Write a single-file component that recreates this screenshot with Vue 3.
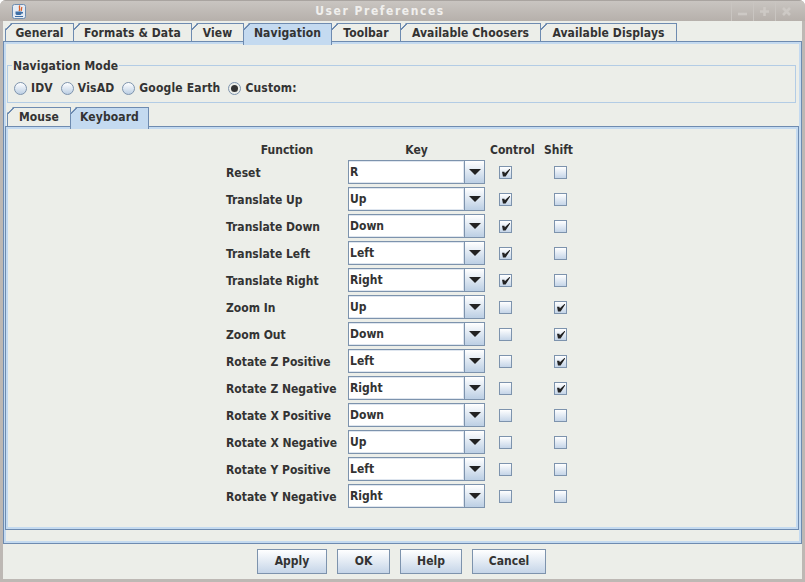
<script setup>
const tabs = [
  { label: 'General', width: 69 },
  { label: 'Formats & Data', width: 119 },
  { label: 'View', width: 53 },
  { label: 'Navigation', width: 89, active: true },
  { label: 'Toolbar', width: 70 },
  { label: 'Available Choosers', width: 141 },
  { label: 'Available Displays', width: 137 },
]
const subTabs = [
  { label: 'Mouse', width: 64 },
  { label: 'Keyboard', width: 79, active: true },
]
const modes = [
  { label: 'IDV' },
  { label: 'VisAD' },
  { label: 'Google Earth' },
  { label: 'Custom:', on: true },
]
const rows = [
  ['Reset', 'R', true, false],
  ['Translate Up', 'Up', true, false],
  ['Translate Down', 'Down', true, false],
  ['Translate Left', 'Left', true, false],
  ['Translate Right', 'Right', true, false],
  ['Zoom In', 'Up', false, true],
  ['Zoom Out', 'Down', false, true],
  ['Rotate Z Positive', 'Left', false, true],
  ['Rotate Z Negative', 'Right', false, true],
  ['Rotate X Positive', 'Down', false, false],
  ['Rotate X Negative', 'Up', false, false],
  ['Rotate Y Positive', 'Left', false, false],
  ['Rotate Y Negative', 'Right', false, false],
]
const buttons = [
  { label: 'Apply', width: 70 },
  { label: 'OK', width: 53 },
  { label: 'Help', width: 62 },
  { label: 'Cancel', width: 74 },
]
</script>

<template>
  <div class="window">
    <header class="titlebar">
      <span class="app-icon">
        <svg width="14" height="15" viewBox="0 0 14 15">
          <rect x="0.5" y="0.5" width="13" height="14" rx="2" fill="#e4ebf4" stroke="#6d8cb0" />
          <path d="M8 1.5 C6 3.5 9 4.5 7 7 M10 3 C9 4.5 10 5.5 9 7" stroke="#d9602a" stroke-width="1.3" fill="none" />
          <path d="M3.5 7.5 H9.5 V9.5 C9.5 10.5 8.5 11 7.5 11 H5.5 C4.5 11 3.5 10.5 3.5 9.5 Z M9.5 8 H11 V9.5 H9.5" fill="#3d6ea5" />
          <path d="M3 12.5 H11" stroke="#3d6ea5" stroke-width="1.2" />
        </svg>
      </span>
      <span class="title">User Preferences</span>
      <div class="controls">
        <span class="ctl">
          <svg width="9" height="9" viewBox="0 0 9 9"><path d="M0 7 H9" /></svg>
        </span>
        <span class="ctl">
          <svg width="9" height="9" viewBox="0 0 9 9"><path d="M0 4.5 H9 M4.5 0 V9" /></svg>
        </span>
        <span class="ctl">
          <svg width="9" height="9" viewBox="0 0 9 9"><path d="M1 1 L8 8 M8 1 L1 8" /></svg>
        </span>
      </div>
    </header>

    <div class="client">
      <nav class="tabs">
        <div
          v-for="t in tabs"
          :key="t.label"
          class="tab"
          :class="{ active: t.active }"
          :style="{ width: t.width + 'px' }"
        >{{ t.label }}</div>
      </nav>

      <section class="outer-panel">
        <div class="group">
          <span class="group-title">Navigation Mode</span>
          <label v-for="m in modes" :key="m.label" class="radio-item">
            <span class="radio" :class="{ on: m.on }"></span>{{ m.label }}
          </label>
        </div>

        <nav class="tabs sub">
          <div
            v-for="t in subTabs"
            :key="t.label"
            class="tab"
            :class="{ active: t.active }"
            :style="{ width: t.width + 'px' }"
          >{{ t.label }}</div>
        </nav>

        <div class="inner-panel">
          <div class="grid">
            <div class="head">Function</div>
            <div class="head">Key</div>
            <div class="head left">Control</div>
            <div class="head left">Shift</div>
            <template v-for="r in rows" :key="r[0]">
              <div class="name">{{ r[0] }}</div>
              <div class="combo">
                <span class="combo-text">{{ r[1] }}</span>
                <span class="combo-btn"><i></i></span>
              </div>
              <div class="cell c1"><span class="check" :class="{ on: r[2] }"></span></div>
              <div class="cell c2"><span class="check" :class="{ on: r[3] }"></span></div>
            </template>
          </div>
        </div>
      </section>

      <footer class="footer">
        <button v-for="b in buttons" :key="b.label" class="btn" :style="{ width: b.width + 'px' }">{{ b.label }}</button>
      </footer>
    </div>
  </div>
</template>

<style>
html, body { margin: 0; background: #fff; }
</style>

<style scoped>
.window {
  width: 805px;
  height: 582px;
  box-sizing: border-box;
  background: #bdb8b4;
  border-radius: 6px 6px 0 0;
  padding: 0 3px 3px;
  display: flex;
  flex-direction: column;
  font-family: "DejaVu Sans Condensed", "DejaVu Sans", sans-serif;
  font-stretch: condensed;
  font-size: 12px;
  font-weight: 700;
  color: #333;
  overflow: hidden;
}
.titlebar {
  height: 21px;
  flex: none;
  margin: 0 -3px;
  display: flex;
  align-items: center;
  position: relative;
  background: linear-gradient(#c9c5c1, #b6b0ab);
  border-top: 1px solid #a9a4a0;
  box-sizing: border-box;
}
.app-icon { margin-left: 12px; display: flex; }
.title {
  position: absolute;
  left: 0;
  width: 760px;
  text-align: center;
  color: #f0efed;
  font-size: 12px;
  letter-spacing: 1.55px;
}
.controls {
  margin-left: auto;
  margin-right: 8px;
  display: flex;
  height: 100%;
}
.ctl {
  width: 22px;
  box-sizing: border-box;
  border-left: 1px solid #c9c5c1;
  display: flex;
  align-items: center;
  justify-content: center;
}
.ctl path {
  stroke: #cdc9c5;
  stroke-width: 2.6;
  fill: none;
}
.client {
  flex: 1;
  display: flex;
  flex-direction: column;
  background: #eceee9;
  min-height: 0;
}
.tabs {
  display: flex;
  height: 20px;
  margin-top: 2px;
  padding-left: 2px;
  flex: none;
  position: relative;
  z-index: 1;
}
.tab {
  position: relative;
  box-sizing: border-box;
  height: 19px;
  border: 1px solid #6e8bb0;
  border-bottom: none;
  text-align: center;
  line-height: 18px;
  letter-spacing: 0.1px;
  clip-path: polygon(6px 0, 100% 0, 100% 100%, 0 100%, 0 6px);
  margin-right: -1px;
}
.tab::before {
  content: "";
  position: absolute;
  left: -1px;
  top: -1px;
  width: 7px;
  height: 7px;
  background: linear-gradient(135deg, transparent 44%, #6e8bb0 44%, #6e8bb0 58%, transparent 58%);
}
.tab.active {
  height: 22px;
  background: #c4daf0;
  z-index: 2;
}
.outer-panel {
  flex: none;
  height: 503px;
  box-sizing: border-box;
  margin-top: -2px;
  border: 1px solid #6e8bb0;
  box-shadow: inset 0 0 0 2px #c4daf0;
  padding: 23px 5px 0 3px;
  display: flex;
  flex-direction: column;
}
.group {
  position: relative;
  height: 38px;
  flex: none;
  box-sizing: border-box;
  border: 1px solid #b3cce5;
  padding: 8px 0 0 6px;
  display: flex;
  align-items: center;
}
.group-title {
  position: absolute;
  top: -8px;
  left: 4px;
  padding: 0 1px;
  background: #eceee9;
  line-height: 16px;
  letter-spacing: 0.15px;
}
.radio-item {
  display: inline-flex;
  align-items: center;
  margin-right: 8px;
  letter-spacing: 0.17px;
}
.radio {
  width: 13px;
  height: 13px;
  box-sizing: border-box;
  border: 1px solid #7d93ad;
  border-radius: 50%;
  background: linear-gradient(#fff, #bccfe4);
  margin-right: 4px;
  position: relative;
}
.radio.on { background: #eceee9; }
.radio.on::after {
  content: "";
  position: absolute;
  left: 2px;
  top: 2px;
  width: 7px;
  height: 7px;
  border-radius: 50%;
  background: #333;
}
.tabs.sub {
  margin-top: 4px;
  padding-left: 0;
}
.inner-panel {
  flex: 1;
  margin: -1px -3px 13px -2px;
  border: 1px solid #6e8bb0;
  box-shadow: inset 0 0 0 2px #c4daf0;
  display: flex;
  justify-content: center;
  padding-top: 12px;
  min-height: 0;
}
.grid {
  display: grid;
  grid-template-columns: 122px 137px 54px 39px;
  grid-template-rows: 19px repeat(13, 27px);
  align-content: start;
}
.head {
  text-align: center;
  line-height: 22px;
}
.head.left { text-align: left; padding-left: 5px; }
.name {
  display: flex;
  align-items: center;
  white-space: nowrap;
  padding-top: 3px;
}
.combo {
  height: 24px;
  box-sizing: border-box;
  border: 1px solid #7d93ad;
  display: flex;
  margin-top: 2px;
}
.combo-text {
  flex: 1;
  background: #fff;
  border: 1px solid #dfe6ef;
  border-width: 1px 1px 1px 0;
  padding-left: 1px;
  line-height: 20px;
}
.combo-btn {
  width: 19px;
  border-left: 1px solid #7d93ad;
  background: linear-gradient(#fff, #bccfe4);
  display: flex;
  align-items: center;
  justify-content: center;
}
.combo-btn i {
  width: 0;
  height: 0;
  border-left: 6px solid transparent;
  border-right: 6px solid transparent;
  border-top: 6px solid #222;
}
.cell { display: flex; align-items: center; padding-top: 1px; }
.c1 { padding-left: 14px; }
.c2 { padding-left: 15px; }
.check {
  width: 13px;
  height: 13px;
  box-sizing: border-box;
  border: 1px solid #7d93ad;
  background: linear-gradient(#fff, #c5d5e8);
  position: relative;
}
.check.on::after {
  content: "";
  position: absolute;
  left: 2px;
  top: 2px;
  width: 8px;
  height: 8px;
  background: #222;
  clip-path: polygon(0 40%, 30% 40%, 35% 60%, 100% 0, 100% 15%, 45% 100%, 12% 100%);
}
.footer {
  flex: 1;
  display: flex;
  justify-content: center;
  align-items: center;
  gap: 10px;
  padding: 0 2px 1px 0;
}
.btn {
  height: 25px;
  box-sizing: border-box;
  padding: 0;
  border: 1px solid #7d93ad;
  background: linear-gradient(#fff, #c5d5e8);
  font: inherit;
  color: #333;
}
</style>
